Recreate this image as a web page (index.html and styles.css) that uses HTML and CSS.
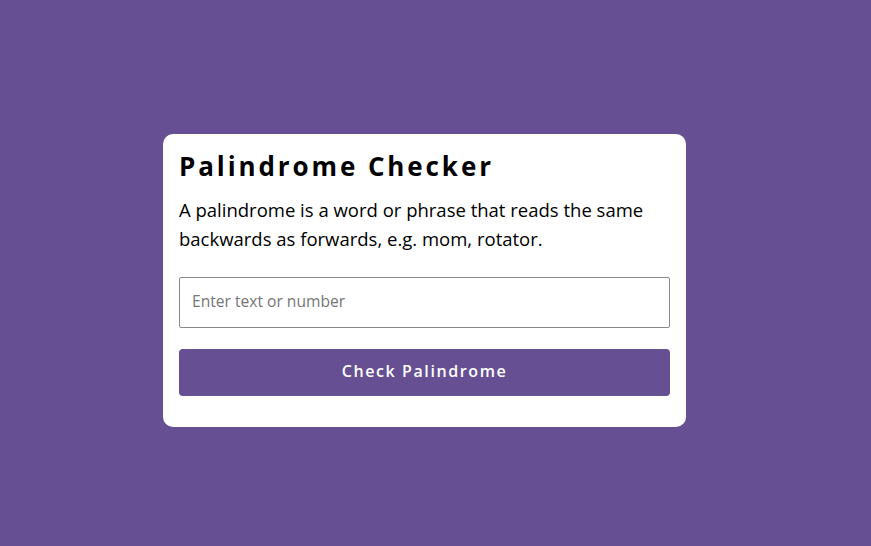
FILE: index.html
```html
<!DOCTYPE html>
<html lang="en">
<head>
<meta charset="utf-8">
<title>Palindrome Checker</title>
<link rel="stylesheet" href="styles.css">
</head>
<body>
<main class="card">
  <h1 class="title">Palindrome Checker</h1>
  <p class="desc">A palindrome is a word or phrase that reads the same backwards as forwards, e.g. mom, rotator.</p>
  <input class="field" type="text" placeholder="Enter text or number">
  <button class="btn" type="button">Check Palindrome</button>
</main>
</body>
</html>
```
FILE: styles.css
```css
* { box-sizing: border-box; }
html, body { height: 100%; }
body {
  margin: 0;
  background: #664f92;
  font-family: "Open Sans", "Noto Sans", sans-serif;
  display: flex;
  align-items: center;
  justify-content: center;
  padding: 15px 22px 0 0;
}
.card {
  width: 523px;
  background: #fff;
  border-radius: 10px;
  padding: 14px 16px 31px 16px;
  display: flex;
  flex-direction: column;
}
.title {
  margin: 0;
  font-size: 26px;
  line-height: 36px;
  font-weight: 700;
  letter-spacing: 2.9px;
  color: #000;
}
.desc {
  margin: 11px 0 0;
  font-size: 18.5px;
  line-height: 29px;
  color: #000;
}
.field {
  margin-top: 24px;
  height: 51px;
  border: 1px solid #8a8a8a;
  border-radius: 2px;
  padding: 0 12px 3px;
  font-family: inherit;
  font-size: 15.6px;
  color: #333;
}
.field::placeholder { color: #767676; }
.btn {
  margin-top: 21px;
  height: 47px;
  border: none;
  border-radius: 4px;
  padding: 0 0 4px;
  background: #664f92;
  color: #fff;
  font-family: inherit;
  font-size: 16px;
  letter-spacing: 1.6px;
  font-weight: 600;
}
```
